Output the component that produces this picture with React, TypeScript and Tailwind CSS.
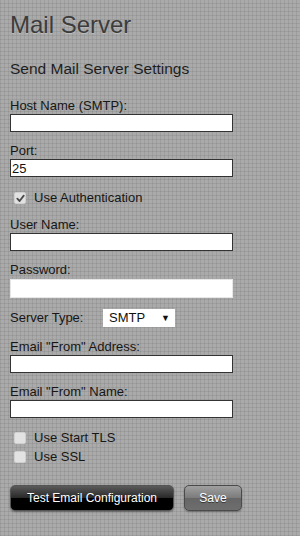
import React from "react";

const font = { fontFamily: '"Liberation Sans", Arial, sans-serif' };

function TextInput({ value = "", light = false }: { value?: string; light?: boolean }) {
  return (
    <input
      type="text"
      defaultValue={value}
      className={
        light
          ? "block w-[223px] h-[19px] bg-white border border-[#e6e6e6] px-[1px] text-[13px] leading-[16px] text-[#111] outline-none"
          : "block w-[223px] h-[18px] bg-white border border-[#333333] px-[1px] text-[13px] leading-[16px] text-[#111] outline-none"
      }
      style={font}
    />
  );
}

function Check({ checked }: { checked: boolean }) {
  return (
    <span className="ml-[4px] flex h-[12px] w-[12px] items-center justify-center rounded-[2px] border border-[#cfcfcf] bg-[#e2e2e2]">
      {checked && (
        <svg width="9" height="9" viewBox="0 0 10 10">
          <path d="M1.5 5.2 L4 7.8 L8.6 1.8" fill="none" stroke="#4a4a4a" strokeWidth="2" strokeLinecap="round" strokeLinejoin="round" />
        </svg>
      )}
    </span>
  );
}

export default function App() {
  return (
    <div
      className="h-[536px] w-[300px] overflow-hidden bg-[#aaaaaa] bg-[image:repeating-linear-gradient(0deg,rgba(0,0,0,0.07)_0px,rgba(0,0,0,0.07)_1px,transparent_1px,transparent_4px),repeating-linear-gradient(90deg,rgba(0,0,0,0.07)_0px,rgba(0,0,0,0.07)_1px,transparent_1px,transparent_4px)] px-[10px] text-[#161616]"
      style={font}
    >
      <h1 className="pt-[11px] text-[24px] leading-[28px] text-[#3c3c3c] [text-shadow:0_1px_0_rgba(255,255,255,0.25)]">
        Mail Server
      </h1>
      <h2 className="mt-[21px] text-[15.5px] leading-[18px] text-[#1e1e1e]">Send Mail Server Settings</h2>

      <div className="mt-[20px] text-[13px] leading-[16px]">Host Name (SMTP):</div>
      <TextInput />

      <div className="mt-[11px] text-[13px] leading-[16px]">Port:</div>
      <TextInput value="25" />

      <label className="mt-[13px] flex h-[16px] items-center gap-[8px] text-[13px] leading-[16px]">
        <Check checked />
        <span>Use Authentication</span>
      </label>

      <div className="mt-[11px] text-[13px] leading-[16px]">User Name:</div>
      <TextInput />

      <div className="mt-[11px] text-[13px] leading-[16px]">Password:</div>
      <div className="mt-[1px]">
        <TextInput light />
      </div>

      <div className="mt-[11px] flex h-[18px] items-center text-[13px] leading-[16px]">
        <span className="w-[93px]">Server Type:</span>
        <div className="flex h-[18px] w-[72px] items-center justify-between bg-white pl-[6px] pr-[5px] text-[#111]">
          <span className="text-[13px]">SMTP</span>
          <span className="text-[9px] leading-none">▼</span>
        </div>
      </div>

      <div className="mt-[12px] text-[13px] leading-[16px]">Email "From" Address:</div>
      <TextInput />

      <div className="mt-[11px] text-[13px] leading-[16px]">Email "From" Name:</div>
      <TextInput />

      <label className="mt-[12px] flex h-[16px] items-center gap-[8px] text-[13px] leading-[16px]">
        <Check checked={false} />
        <span>Use Start TLS</span>
      </label>
      <label className="mt-[3px] flex h-[16px] items-center gap-[8px] text-[13px] leading-[16px]">
        <Check checked={false} />
        <span>Use SSL</span>
      </label>

      <div className="mt-[20px] flex gap-[10px]">
        <button
          className="h-[26px] w-[164px] rounded-[5px] border border-[#555] bg-[linear-gradient(#5a5a5a,#2a2a2a_48%,#000_52%,#000)] text-[12px] text-white shadow-[0_1px_2px_rgba(0,0,0,0.4)] [text-shadow:0_1px_0_rgba(0,0,0,0.6)]"
          style={font}
        >
          Test Email Configuration
        </button>
        <button
          className="h-[26px] w-[58px] rounded-[5px] border border-[#4a4a4a] bg-[linear-gradient(#a0a0a0,#7c7c7c_48%,#666_52%,#6e6e6e)] text-[12px] text-white shadow-[0_1px_2px_rgba(0,0,0,0.35)] [text-shadow:0_1px_0_rgba(0,0,0,0.5)]"
          style={font}
        >
          Save
        </button>
      </div>
    </div>
  );
}
